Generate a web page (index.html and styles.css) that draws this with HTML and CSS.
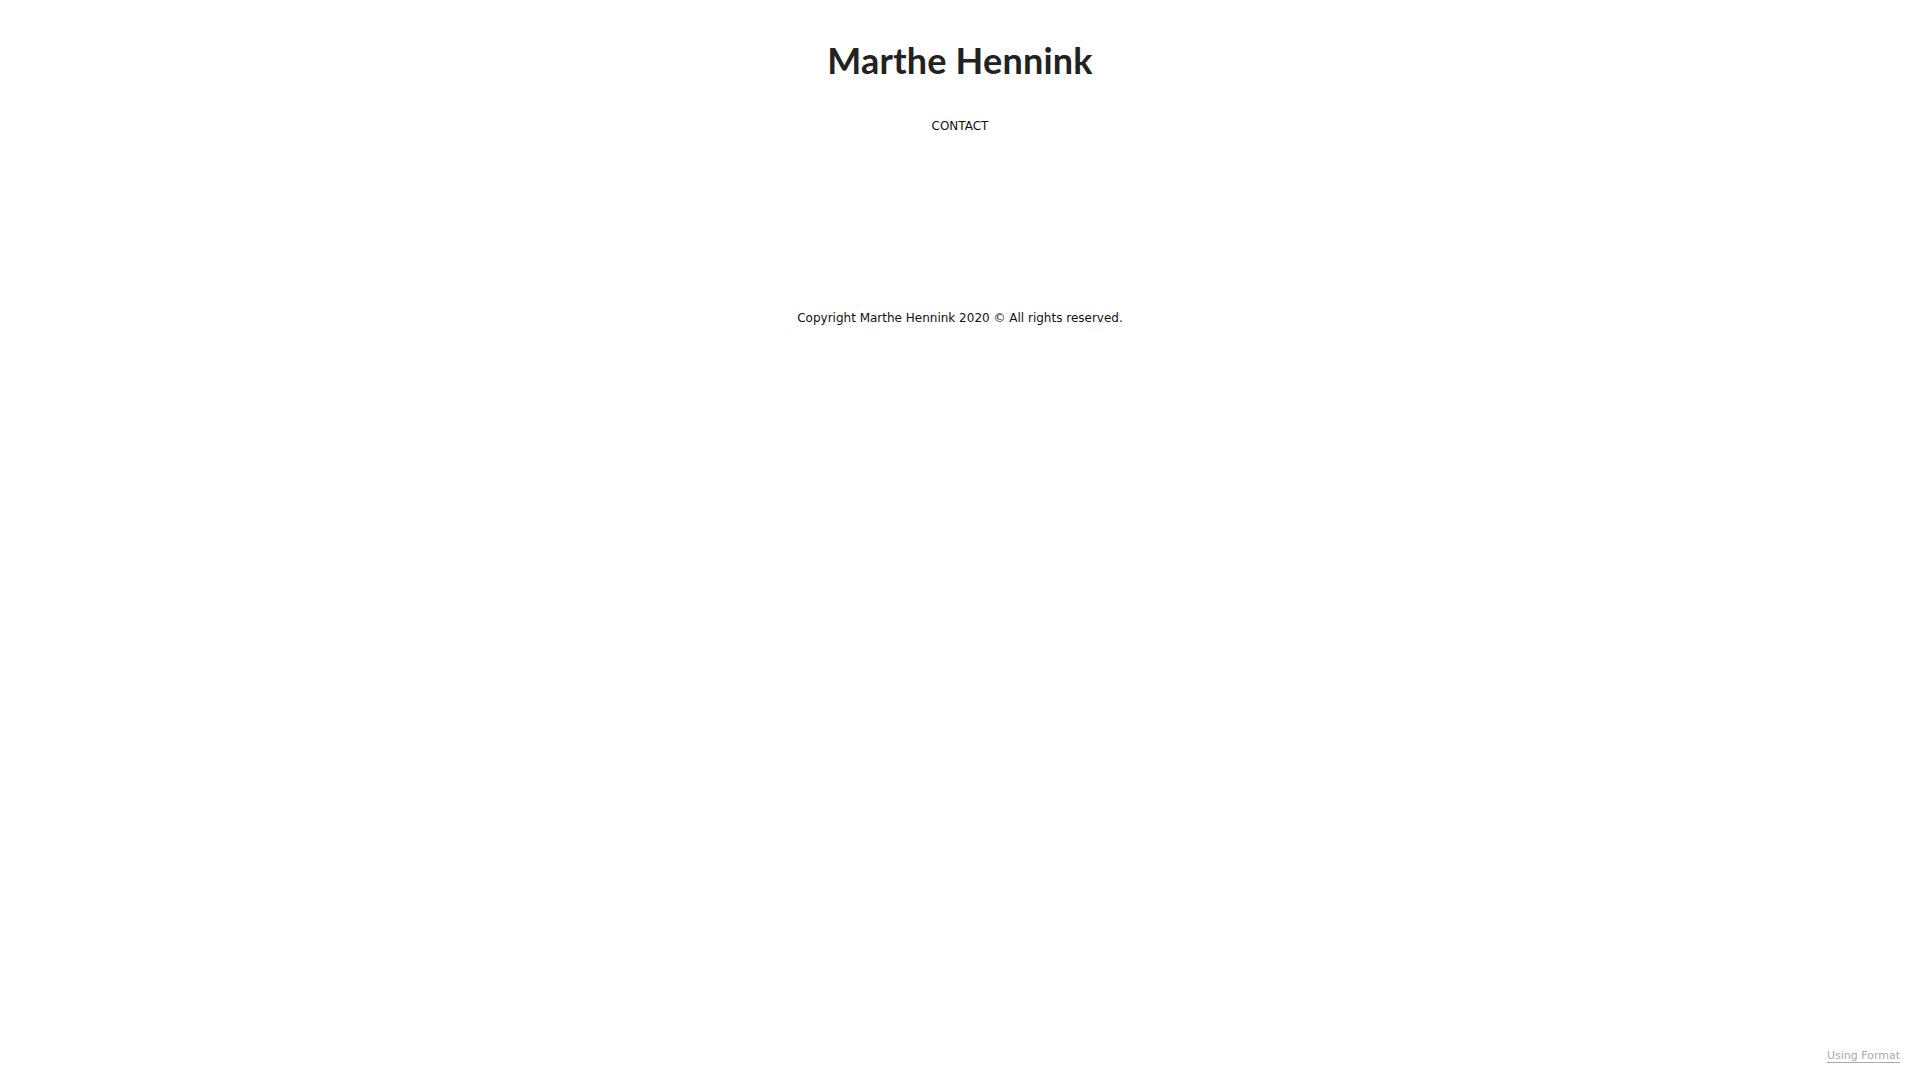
FILE: index.html
```html
<!DOCTYPE html>
<html>
<head>
<meta charset="utf-8">
<link rel="stylesheet" href="styles.css">
</head>
<body>
<header class="header">
  <h1 class="title">Marthe Hennink</h1>
  <nav class="nav"><a class="nav-link" href="#">CONTACT</a></nav>
</header>
<footer class="footer">
  <p class="copyright">Copyright Marthe Hennink 2020 © All rights reserved.</p>
</footer>
<a class="using" href="#">Using Format</a>
</body>
</html>
```
FILE: styles.css
```css
html, body {
  margin: 0;
  padding: 0;
  background: #fff;
}
body {
  font-family: "DejaVu Sans", sans-serif;
  color: #111;
  min-height: 1080px;
  position: relative;
}
.header {
  display: flex;
  flex-direction: column;
  align-items: center;
  padding-top: 38px;
}
.title {
  margin: 0;
  font-family: "Lato", "Open Sans", sans-serif;
  font-weight: 700;
  font-size: 36px;
  line-height: 44px;
  color: #222;
  letter-spacing: 0.2px;
}
.nav {
  margin-top: 36px;
}
.nav-link {
  font-size: 12px;
  line-height: 16px;
  color: #111;
  text-decoration: none;
  display: block;
}
.footer {
  display: flex;
  justify-content: center;
  margin-top: 176px;
}
.copyright {
  margin: 0;
  font-size: 12px;
  line-height: 16px;
  color: #111;
}
.using {
  position: absolute;
  right: 20px;
  bottom: 17px;
  font-size: 11px;
  line-height: 13px;
  color: #aaa;
  text-decoration: none;
  border-bottom: 1px solid #aaa;
}
```
